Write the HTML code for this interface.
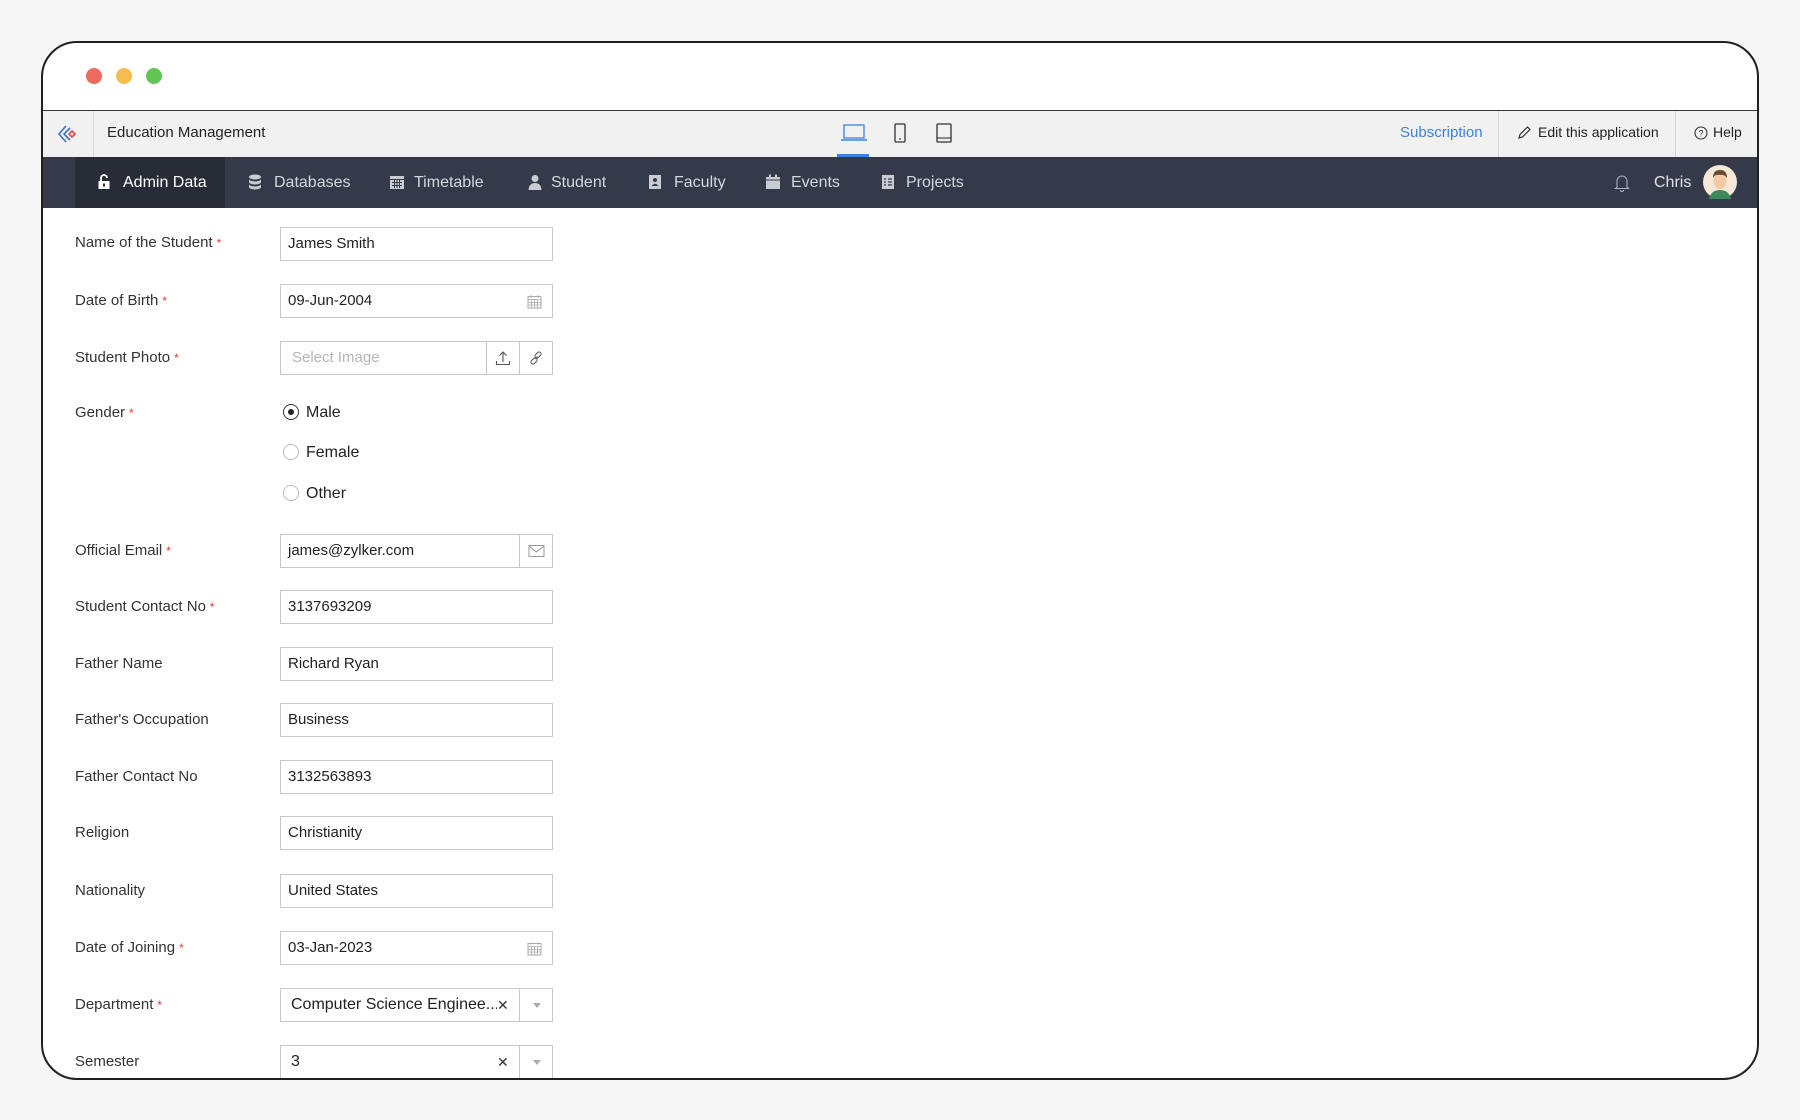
<!DOCTYPE html>
<html><head><meta charset="utf-8"><style>
*{box-sizing:border-box;margin:0;padding:0}
body{width:1800px;height:1120px;background:#f6f6f6;font-family:"Liberation Sans",sans-serif;position:relative;overflow:hidden}
.win{position:absolute;left:41px;top:41px;width:1718px;height:1039px;border:2px solid #1f1f1f;border-radius:36px;background:#fff;overflow:hidden}
.a{position:absolute}
.dot{position:absolute;top:25px;width:16px;height:16px;border-radius:50%}
.hdr{position:absolute;left:0;top:67px;width:100%;height:47px;background:#f1f1f1;border-top:1.5px solid #333}
.nav{position:absolute;left:0;top:114px;width:100%;height:51px;background:#343a4a}
.ni{position:absolute;top:0;height:51px;line-height:51px;color:#d4d7de;font-size:16px}
.ic{position:absolute;top:17px}
.lbl{position:absolute;left:32px;font-size:15px;color:#333;line-height:20px}
.lbl b{color:#e53935;font-weight:normal;font-size:12px;vertical-align:top;margin-left:4px}
.inp{position:absolute;left:237px;width:273px;height:34px;border:1px solid #c8c8c8;font-size:15px;color:#222;line-height:32px;padding-left:7px;background:#fff}
.rad{position:absolute;left:240px;font-size:16px;color:#222;line-height:20px}
.rad i{display:inline-block;width:16px;height:16px;border:1px solid #bbb;border-radius:50%;vertical-align:-3px;margin-right:7px;position:relative}
</style></head><body>
<div class="win">
 <div class="dot" style="left:43px;background:#ee6a5f"></div>
 <div class="dot" style="left:73px;background:#f5be4f"></div>
 <div class="dot" style="left:103px;background:#62c554"></div>

 <div class="hdr">
  <svg class="a" style="left:14px;top:13px" width="22" height="20" viewBox="0 0 22 20"><path d="M9 2 L2 10 L9 18 M13 4 L7 10 L13 16" fill="none" stroke="#3d6fc7" stroke-width="1.6"/><path d="M15 7 L18 10 L15 13 L12 10Z" fill="none" stroke="#e2483d" stroke-width="1.6"/></svg>
  <div class="a" style="left:50px;top:0;width:1px;height:46px;background:#d8d8d8"></div>
  <div class="a" style="left:64px;top:13px;font-size:15px;color:#222">Education Management</div>
  <svg class="a" style="left:797px;top:12px" width="28" height="20" viewBox="0 0 28 20"><rect x="4" y="2" width="20" height="13" fill="none" stroke="#3b82e0" stroke-width="1.3"/><path d="M1 17 H27" stroke="#3b82e0" stroke-width="1.5"/></svg>
  <div class="a" style="left:794px;top:43px;width:32px;height:3px;background:#3b82e0"></div>
  <svg class="a" style="left:850px;top:11px" width="14" height="22" viewBox="0 0 14 22"><rect x="2" y="2" width="10" height="18" rx="1" fill="none" stroke="#333" stroke-width="1.3"/><circle cx="7" cy="17" r="0.9" fill="#333"/></svg>
  <svg class="a" style="left:892px;top:11px" width="18" height="22" viewBox="0 0 18 22"><rect x="2" y="2" width="14" height="18" rx="1" fill="none" stroke="#333" stroke-width="1.3"/><path d="M2 16 H16" stroke="#333" stroke-width="1.1"/></svg>
  <div class="a" style="left:1357px;top:13px;font-size:15px;color:#3b82e0">Subscription</div>
  <div class="a" style="left:1455px;top:0;width:1px;height:46px;background:#d6d6d6"></div>
  <svg class="a" style="left:1474px;top:14px" width="15" height="15" viewBox="0 0 15 15"><path d="M2 13 L3 9.5 L10.5 2 L13 4.5 L5.5 12Z" fill="none" stroke="#333" stroke-width="1.2"/></svg>
  <div class="a" style="left:1495px;top:13px;font-size:14px;color:#222">Edit this application</div>
  <div class="a" style="left:1632px;top:0;width:1px;height:46px;background:#d6d6d6"></div>
  <svg class="a" style="left:1651px;top:15px" width="14" height="14" viewBox="0 0 14 14"><circle cx="7" cy="7" r="6" fill="none" stroke="#333" stroke-width="1.1"/><text x="7" y="10.5" font-size="9" text-anchor="middle" fill="#333" font-family="Liberation Sans">?</text></svg>
  <div class="a" style="left:1670px;top:13px;font-size:14px;color:#222">Help</div>
 </div>

 <div class="nav">
  <div class="a" style="left:32px;top:0;width:150px;height:51px;background:#272c37"></div>
  <svg class="ic" style="left:54px" width="14" height="16" viewBox="0 0 14 16"><path d="M4 7 V4 a3 3 0 0 1 6 0" fill="none" stroke="#fff" stroke-width="1.8"/><rect x="1.5" y="7" width="11" height="8" fill="#fff"/><rect x="6" y="9.5" width="2" height="3" fill="#272c37"/></svg>
  <div class="ni" style="left:80px;color:#fff">Admin Data</div>
  <svg class="ic" style="left:205px" width="14" height="16" viewBox="0 0 14 16"><ellipse cx="7" cy="3" rx="6" ry="2.5" fill="#c9ccd3"/><path d="M1 5 v3 a6 2.5 0 0 0 12 0 v-3 a6 2.5 0 0 1 -12 0Z M1 10 v3 a6 2.5 0 0 0 12 0 v-3 a6 2.5 0 0 1 -12 0Z" fill="#c9ccd3"/></svg>
  <div class="ni" style="left:231px">Databases</div>
  <svg class="ic" style="left:346px" width="16" height="16" viewBox="0 0 16 16"><rect x="1" y="2" width="14" height="13" fill="#c9ccd3"/><path d="M1 5.5H15 M3 8.5H13 M3 11.5H13 M5.5 6V14 M8 6V14 M10.5 6V14" stroke="#343a4a" stroke-width="1"/></svg>
  <div class="ni" style="left:371px">Timetable</div>
  <svg class="ic" style="left:484px" width="16" height="16" viewBox="0 0 16 16"><circle cx="8" cy="4.5" r="3.5" fill="#c9ccd3"/><path d="M1.5 16 Q2 9 8 9 Q14 9 14.5 16Z" fill="#c9ccd3"/></svg>
  <div class="ni" style="left:508px">Student</div>
  <svg class="ic" style="left:605px" width="14" height="16" viewBox="0 0 14 16"><rect x="1" y="1" width="12" height="14" fill="#c9ccd3"/><circle cx="7" cy="6" r="2" fill="#343a4a"/><path d="M3.5 12 Q7 7.5 10.5 12Z" fill="#343a4a"/></svg>
  <div class="ni" style="left:631px">Faculty</div>
  <svg class="ic" style="left:722px" width="16" height="16" viewBox="0 0 16 16"><rect x="1" y="3" width="14" height="12" fill="#c9ccd3"/><rect x="4" y="0.5" width="2" height="4" fill="#c9ccd3"/><rect x="10" y="0.5" width="2" height="4" fill="#c9ccd3"/><path d="M1 6H15" stroke="#343a4a"/></svg>
  <div class="ni" style="left:748px">Events</div>
  <svg class="ic" style="left:838px" width="14" height="16" viewBox="0 0 14 16"><rect x="1" y="1" width="12" height="14" fill="#c9ccd3"/><path d="M3 5H5 M7 5H11 M3 8H5 M7 8H11 M3 11H5 M7 11H11" stroke="#343a4a" stroke-width="1.2"/></svg>
  <div class="ni" style="left:863px">Projects</div>
  <svg class="ic" style="left:1571px;top:17px" width="16" height="18" viewBox="0 0 16 18"><path d="M3 13 V7 a5 5 0 0 1 10 0 V13 L14.5 14.5 H1.5Z M6.5 16 a1.5 1.5 0 0 0 3 0" fill="none" stroke="#aab0bc" stroke-width="1.1"/></svg>
  <div class="ni" style="left:1611px;color:#e0e2e7">Chris</div>
  <svg class="a" style="left:1660px;top:8px" width="34" height="34" viewBox="0 0 34 34"><circle cx="17" cy="17" r="17" fill="#f6e7d7"/><path d="M6 34 Q8 25 17 25 Q26 25 28 34Z" fill="#3f8a5b"/><ellipse cx="17" cy="16" rx="6.5" ry="8" fill="#f3c9a6"/><path d="M10 13 Q10 5 17 5 Q24 5 24 13 Q21 9 17 10 Q12 9 10 13Z" fill="#6b4a35"/></svg>
 </div>

 <div class="lbl" style="top:190px">Name of the Student<b>*</b></div>
 <div class="inp" style="top:184px">James Smith</div>

 <div class="lbl" style="top:248px">Date of Birth<b>*</b></div>
 <div class="inp" style="top:241px">09-Jun-2004<svg class="a" style="right:10px;top:9px" width="15" height="15" viewBox="0 0 15 15"><rect x="1" y="2.5" width="13" height="11.5" fill="none" stroke="#aaa"/><path d="M1 5.5H14 M4 1V4 M11 1V4 M1 8.5H14 M1 11H14 M4.5 5.5V14 M7.5 5.5V14 M10.5 5.5V14" stroke="#aaa" stroke-width="0.8"/></svg></div>

 <div class="lbl" style="top:305px">Student Photo<b>*</b></div>
 <div class="inp" style="top:298px;color:#b5b5b5;padding-left:11px">Select Image
  <div class="a" style="left:205px;top:0;width:1px;height:32px;background:#c8c8c8"></div>
  <div class="a" style="left:238px;top:0;width:1px;height:32px;background:#c8c8c8"></div>
  <svg class="a" style="left:214px;top:8px" width="16" height="16" viewBox="0 0 16 16"><path d="M8 12V2 M4.5 5.5 L8 2 L11.5 5.5 M1.5 11V14.5H14.5V11" fill="none" stroke="#555" stroke-width="1.1"/></svg>
  <svg class="a" style="left:247px;top:8px" width="16" height="16" viewBox="0 0 16 16"><path d="M7 9 L9.5 6.5" stroke="#555"/><rect x="8" y="1.5" width="4" height="7" rx="2" transform="rotate(45 10 5)" fill="none" stroke="#555"/><rect x="4" y="7.5" width="4" height="7" rx="2" transform="rotate(45 6 11)" fill="none" stroke="#555"/></svg>
 </div>

 <div class="lbl" style="top:360px">Gender<b>*</b></div>
 <div class="rad" style="top:360px"><i style="border-color:#333"><span style="position:absolute;left:4px;top:4px;width:6px;height:6px;border-radius:50%;background:#222"></span></i>Male</div>
 <div class="rad" style="top:400px"><i></i>Female</div>
 <div class="rad" style="top:441px"><i></i>Other</div>

 <div class="lbl" style="top:498px">Official Email<b>*</b></div>
 <div class="inp" style="top:491px">james@zylker.com
  <div class="a" style="left:238px;top:0;width:1px;height:32px;background:#c8c8c8"></div>
  <svg class="a" style="left:247px;top:9px" width="17" height="14" viewBox="0 0 17 14"><rect x="1" y="1.5" width="15" height="11" fill="none" stroke="#999"/><path d="M1 2 L8.5 8 L16 2" fill="none" stroke="#999"/></svg>
 </div>

 <div class="lbl" style="top:554px">Student Contact No<b>*</b></div>
 <div class="inp" style="top:547px">3137693209</div>
 <div class="lbl" style="top:611px">Father Name</div>
 <div class="inp" style="top:604px">Richard Ryan</div>
 <div class="lbl" style="top:667px">Father's Occupation</div>
 <div class="inp" style="top:660px">Business</div>
 <div class="lbl" style="top:724px">Father Contact No</div>
 <div class="inp" style="top:717px">3132563893</div>
 <div class="lbl" style="top:780px">Religion</div>
 <div class="inp" style="top:773px">Christianity</div>
 <div class="lbl" style="top:838px">Nationality</div>
 <div class="inp" style="top:831px">United States</div>

 <div class="lbl" style="top:895px">Date of Joining<b>*</b></div>
 <div class="inp" style="top:888px">03-Jan-2023<svg class="a" style="right:10px;top:9px" width="15" height="15" viewBox="0 0 15 15"><rect x="1" y="2.5" width="13" height="11.5" fill="none" stroke="#aaa"/><path d="M1 5.5H14 M4 1V4 M11 1V4 M1 8.5H14 M1 11H14 M4.5 5.5V14 M7.5 5.5V14 M10.5 5.5V14" stroke="#aaa" stroke-width="0.8"/></svg></div>

 <div class="lbl" style="top:952px">Department<b>*</b></div>
 <div class="inp" style="top:945px;padding-left:10px;font-size:16px;white-space:nowrap">Computer Science Enginee...
  <span class="a" style="left:216px;top:0;font-size:14px;color:#333;background:#fff">✕</span>
  <div class="a" style="left:238px;top:0;width:1px;height:32px;background:#c8c8c8"></div>
  <svg class="a" style="left:252px;top:14px" width="8" height="5" viewBox="0 0 8 5"><path d="M0 0H8L4 5Z" fill="#aaa"/></svg>
 </div>

 <div class="lbl" style="top:1009px">Semester</div>
 <div class="inp" style="top:1002px;padding-left:10px;font-size:16px">3
  <span class="a" style="left:216px;top:0;font-size:14px;color:#333">✕</span>
  <div class="a" style="left:238px;top:0;width:1px;height:32px;background:#c8c8c8"></div>
  <svg class="a" style="left:252px;top:14px" width="8" height="5" viewBox="0 0 8 5"><path d="M0 0H8L4 5Z" fill="#aaa"/></svg>
 </div>
</div>
</body></html>
